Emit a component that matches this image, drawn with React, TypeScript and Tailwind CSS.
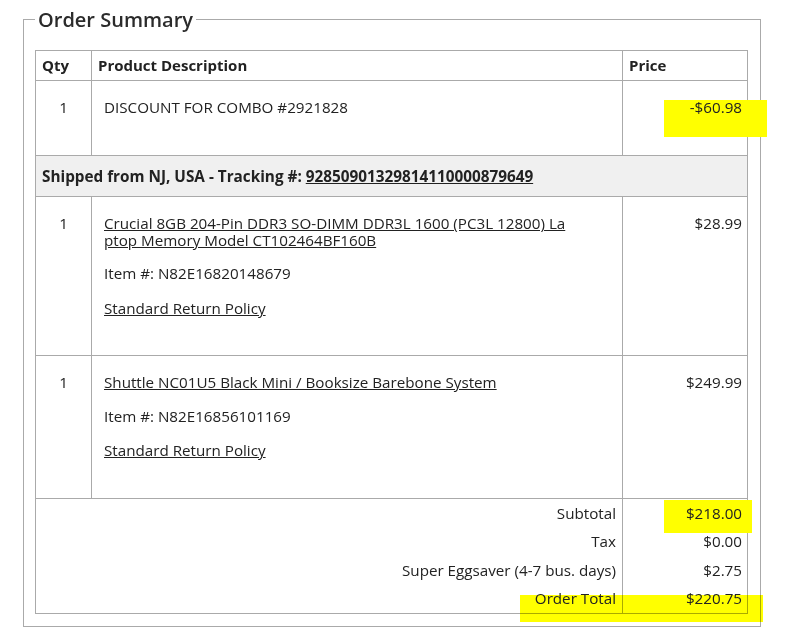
import React from 'react';

const font = { fontFamily: '"Open Sans", "Noto Sans", Arial, sans-serif' };

type Item = { name: string[]; itemNo: string; price: string; height: string; nameGap: string; policyGap: string };

const items: Item[] = [
  {
    name: ['Crucial 8GB 204-Pin DDR3 SO-DIMM DDR3L 1600 (PC3L 12800) La', 'ptop Memory Model CT102464BF160B'],
    itemNo: 'N82E16820148679',
    price: '$28.99',
    height: 'h-[159px]',
    nameGap: 'mt-[16px]',
    policyGap: 'mt-[18px]',
  },
  {
    name: ['Shuttle NC01U5 Black Mini / Booksize Barebone System'],
    itemNo: 'N82E16856101169',
    price: '$249.99',
    height: 'h-[143px]',
    nameGap: 'mt-[17px]',
    policyGap: 'mt-[17px]',
  },
];

const totals = [
  ['Subtotal', '$218.00'],
  ['Tax', '$0.00'],
  ['Super Eggsaver (4-7 bus. days)', '$2.75'],
  ['Order Total', '$220.75'],
];

export default function App() {
  return (
    <div className="relative w-[793px] h-[642px] bg-white text-[#222] text-[15.2px]" style={font}>
      <fieldset className="ml-[23px] mt-[6px] w-[738px] border border-[#aaa] px-[11px] pt-[17px] pb-[12px]">
        <legend className="px-[3px] text-[20px] leading-[27px] font-semibold text-[#2b2b2b]">Order Summary</legend>

        <div className="w-[713px] border border-[#aaa]">
          {/* header */}
          <div className="flex h-[29px] items-center text-[15px] font-bold">
            <div className="w-[55px] h-full flex items-center pl-[6px]">Qty</div>
            <div className="w-[531px] h-full flex items-center pl-[6px] border-l border-[#aaa]">Product Description</div>
            <div className="flex-1 h-full flex items-center pl-[6px] border-l border-[#aaa]">Price</div>
          </div>

          {/* discount */}
          <div className="flex h-[75px] border-t border-[#aaa] leading-[17px]">
            <div className="w-[55px] pt-[18px] text-center">1</div>
            <div className="w-[531px] pt-[18px] pl-[12px] border-l border-[#aaa]">DISCOUNT FOR COMBO #2921828</div>
            <div className="flex-1 pt-[18px] pr-[5px] text-right border-l border-[#aaa]">
              <span className="relative z-10">-$60.98</span>
            </div>
          </div>

          {/* shipped */}
          <div className="flex h-[41px] items-center border-t border-[#aaa] bg-[#f0f0f0] pl-[6px] text-[15.3px] font-bold">
            Shipped from NJ, USA - Tracking #:&nbsp;<span className="underline">92850901329814110000879649</span>
          </div>

          {items.map((it) => (
            <div key={it.itemNo} className={`flex ${it.height} border-t border-[#aaa] leading-[17px]`}>
              <div className="w-[55px] pt-[18px] text-center">1</div>
              <div className="w-[531px] pt-[18px] pl-[12px] border-l border-[#aaa]">
                {it.name.map((l) => (
                  <div key={l} className="underline">{l}</div>
                ))}
                <div className={it.nameGap}>Item #: {it.itemNo}</div>
                <div className={`${it.policyGap} underline`}>Standard Return Policy</div>
              </div>
              <div className="flex-1 pt-[18px] pr-[5px] text-right border-l border-[#aaa]">{it.price}</div>
            </div>
          ))}

          {/* totals */}
          <div className="flex border-t border-[#aaa]">
            <div className="w-[586px]">
              {totals.map(([label]) => (
                <div key={label} className="h-[28.5px] flex items-center justify-end pr-[6px]">
                  <span className="relative z-10">{label}</span>
                </div>
              ))}
            </div>
            <div className="flex-1 border-l border-[#aaa]">
              {totals.map(([label, v]) => (
                <div key={label} className="h-[28.5px] flex items-center justify-end pr-[5px]">
                  <span className="relative z-10">{v}</span>
                </div>
              ))}
            </div>
          </div>
        </div>
      </fieldset>

      {/* highlighter marks */}
      <div className="absolute left-[664px] top-[94px] w-[103px] h-[37px] bg-[#ffff00]" />
      <div className="absolute left-[664px] top-[494px] w-[88px] h-[33px] bg-[#ffff00]" />
      <div className="absolute left-[520px] top-[589px] w-[243px] h-[27px] bg-[#ffff00] mix-blend-multiply" />
    </div>
  );
}
